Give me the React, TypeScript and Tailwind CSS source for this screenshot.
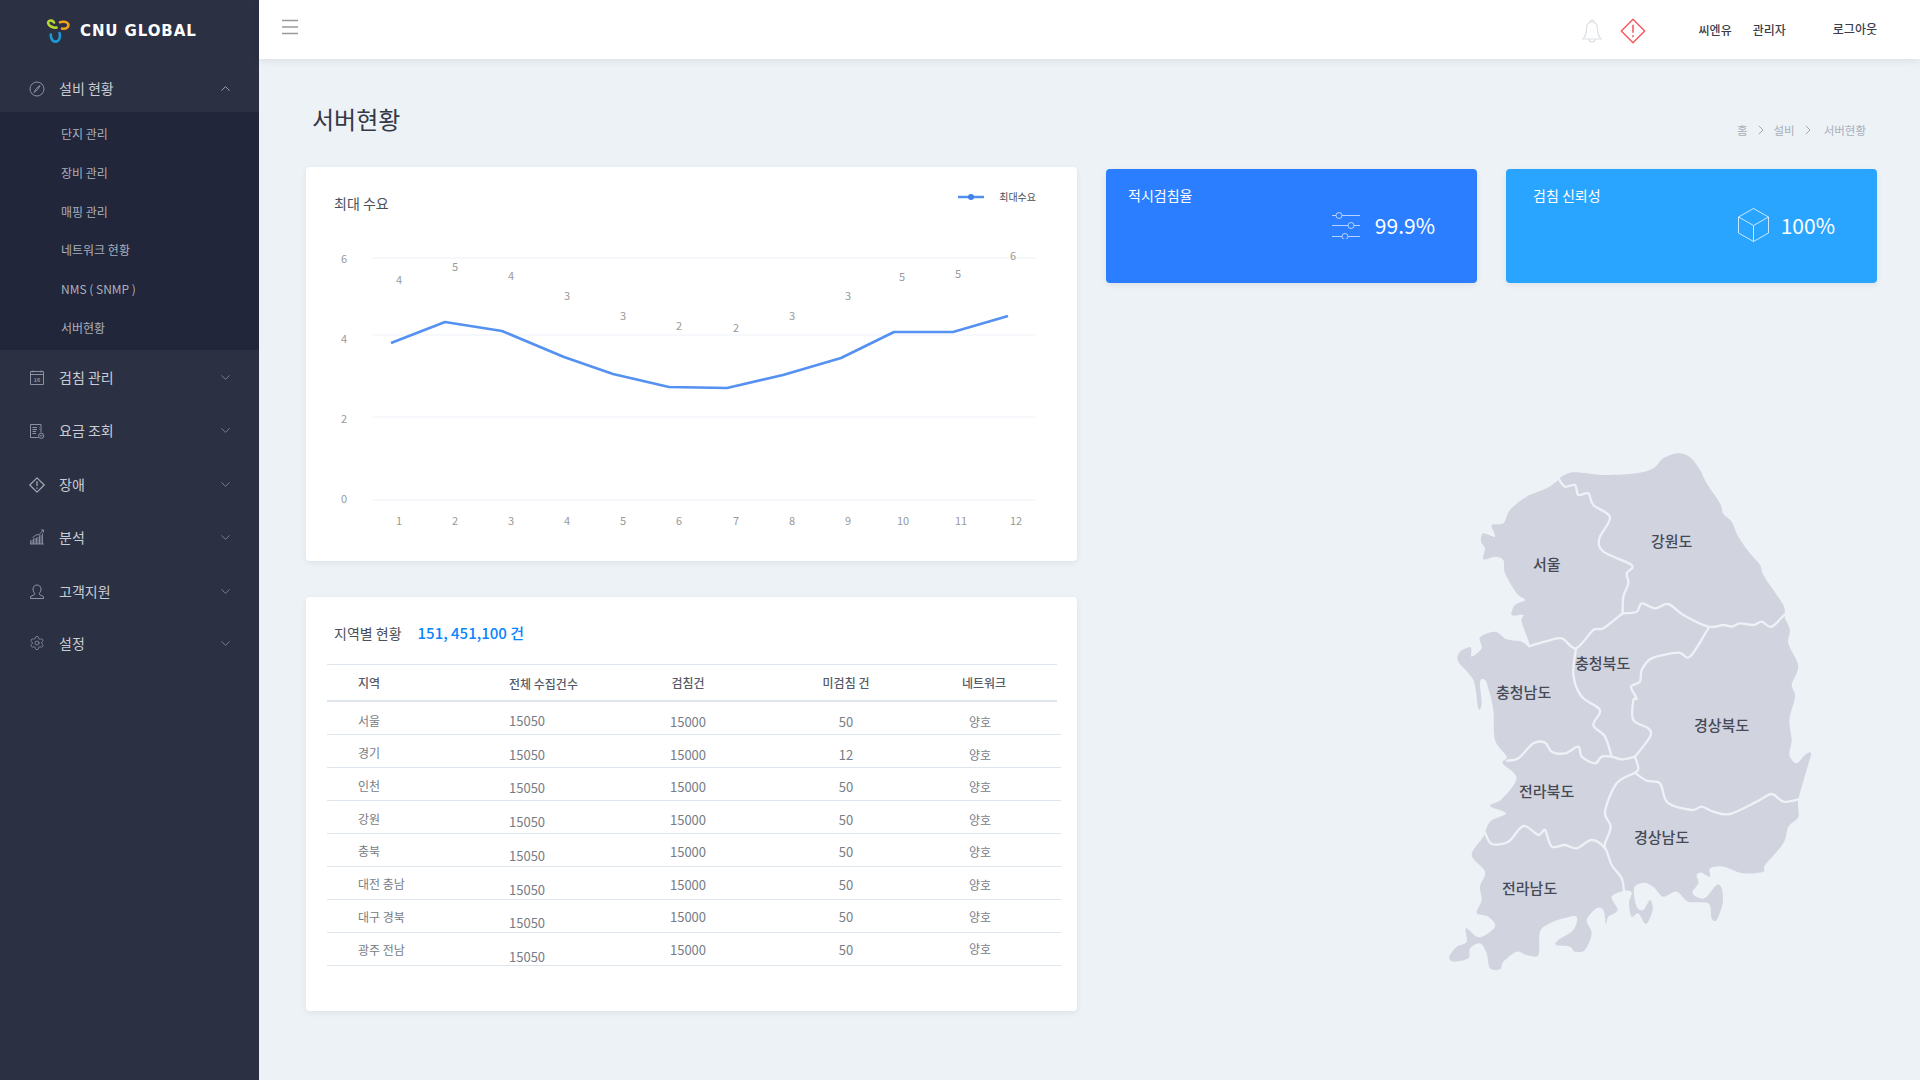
import React from "react";
import { ChevronDown, ChevronRight, ChevronUp, Settings } from "lucide-react";

const FONT = "[font-family:'Noto_Sans_CJK_KR','Noto_Sans',sans-serif]";

// smooth curve through a list of points (catmull-rom to bezier)
const smooth = (pts: number[][], close = false) => {
  const n = pts.length;
  const at = (i: number) => (close ? pts[(i + n) % n] : pts[Math.max(0, Math.min(n - 1, i))]);
  let d = `M${pts[0][0]} ${pts[0][1]}`;
  const end = close ? n : n - 1;
  for (let i = 0; i < end; i++) {
    const [p0, p1, p2, p3] = [at(i - 1), at(i), at(i + 1), at(i + 2)];
    const k = 0.16;
    d += `C${p1[0] + (p2[0] - p0[0]) * k} ${p1[1] + (p2[1] - p0[1]) * k} ${p2[0] - (p3[0] - p1[0]) * k} ${p2[1] - (p3[1] - p1[1]) * k} ${p2[0]} ${p2[1]}`;
  }
  return d + (close ? "Z" : "");
};

const Y = 780; // second half of the map was traced with this y offset
const low = (pts: number[][]) => pts.map(([x, y]) => [x, y + Y]);

const outline = [
  [392, 112], [430, 97], [520, 105], [620, 100], [670, 85], [700, 55], [745, 40], [780, 52], [810, 90], [830, 130], [870, 190], [880, 222], [905, 245], [925, 290], [960, 340], [990, 375], [1000, 405], [1030, 450], [1060, 495], [1065, 520], [1065, 535], [1080, 570], [1075, 610], [1103, 670], [1100, 700], [1085, 735], [1095, 770],
  ...low([[1078, 60], [1085, 120], [1078, 165], [1100, 190], [1125, 165], [1143, 160], [1130, 210], [1105, 300], [1105, 350], [1075, 380], [1060, 430], [1005, 495], [1000, 515], [940, 520], [880, 500], [840, 505], [840, 530], [815, 518], [800, 525], [805, 550], [787, 578], [810, 595], [830, 590], [860, 555], [875, 565], [878, 610], [860, 660], [845, 655], [835, 610], [775, 605], [740, 575], [700, 590], [670, 560], [640, 548], [612, 565], [620, 620], [640, 630], [660, 600], [668, 630], [648, 672], [625, 640], [605, 650], [597, 610], [605, 578], [585, 572], [545, 590], [563, 630], [535, 650], [528, 672], [520, 630], [500, 625], [470, 660], [485, 700], [465, 750], [435, 755], [420, 740], [378, 735], [385, 720], [430, 690], [440, 650], [400, 655], [360, 670], [330, 695], [325, 765], [290, 765], [260, 755], [220, 785], [210, 808], [180, 805], [170, 760], [150, 730], [120, 745], [115, 775], [70, 785], [58, 770], [80, 740], [110, 725], [108, 685], [148, 712], [195, 680], [175, 650], [140, 640], [155, 600], [150, 560], [165, 515], [125, 465], [160, 410], [180, 365], [228, 340], [180, 318], [215, 298], [260, 235], [218, 190], [230, 170], [195, 120], [190, 30]]),
  [175, 745], [165, 720], [150, 725], [155, 790], [145, 805], [130, 720], [85, 665], [90, 635], [122, 622], [125, 650], [155, 625], [150, 592], [195, 575], [230, 598], [275, 605], [300, 620], [275, 545], [280, 525], [245, 525], [255, 495], [285, 480], [260, 460], [225, 400], [220, 360], [195, 350], [160, 358], [165, 325], [153, 305], [160, 280], [195, 290], [185, 255], [220, 250], [240, 210], [290, 170], [350, 145], [385, 120],
];

const borders = [
  [[385, 115], [405, 140], [435, 135], [445, 165], [475, 160], [490, 195], [540, 232], [508, 295], [520, 335], [605, 375], [590, 400], [595, 430], [580, 470], [578, 520]],
  [[300, 618], [345, 605], [395, 595], [438, 625], [490, 570], [520, 565], [578, 520]],
  [[578, 520], [620, 515], [635, 490], [675, 505], [715, 492], [760, 525], [835, 560], [880, 555], [905, 560], [930, 550], [970, 555], [995, 545], [1025, 560], [1065, 522]],
  [[835, 565], [780, 650], [745, 638], [665, 655], [635, 690], [630, 725], [603, 740], [620, 775], ...low([[610, 0], [610, 60], [655, 85], [660, 110], [615, 170]])],
  [[438, 625], [430, 705], [455, 770], ...low([[510, 30], [490, 75], [525, 110], [545, 170]])],
  low([[232, 182], [265, 175], [310, 130], [345, 128], [365, 155], [405, 160], [445, 140], [455, 170], [495, 190], [515, 170], [545, 170], [575, 178], [615, 170]]),
  low([[615, 170], [625, 205], [615, 218], [560, 250], [525, 335], [542, 380], [525, 430], [525, 445]]),
  low([[615, 218], [650, 242], [690, 250], [713, 308], [785, 330], [815, 320], [850, 335], [900, 342], [980, 305], [1025, 282], [1060, 305], [1105, 298]]),
  low([[165, 398], [185, 432], [235, 425], [280, 378], [325, 405], [345, 390], [365, 440], [405, 435], [440, 445], [485, 420], [525, 445], [545, 495], [575, 535], [582, 575]]),
];

const mapLabels = [
  { name: "강원도", pos: "left-[221px] top-[91px]" },
  { name: "서울", pos: "left-[103px] top-[114px]" },
  { name: "충청북도", pos: "left-[145px] top-[213px]" },
  { name: "충청남도", pos: "left-[66px] top-[242px]" },
  { name: "경상북도", pos: "left-[264px] top-[275px]" },
  { name: "전라북도", pos: "left-[89px] top-[341px]" },
  { name: "경상남도", pos: "left-[204px] top-[387px]" },
  { name: "전라남도", pos: "left-[72px] top-[438px]" },
];

const KoreaMap = () => (
  <div className="relative ml-[324px] mt-[157px] h-[540px] w-[400px]">
    <svg viewBox="0 0 1200 1620" className="h-full w-full">
      <path d={smooth(outline, true)} fill="#d1d3df" />
      {borders.map((b, i) => (
        <path key={i} d={smooth(b)} fill="none" stroke="#edf2f7" strokeWidth="7" strokeLinecap="round" strokeLinejoin="round" />
      ))}
    </svg>
    {mapLabels.map((l) => (
      <span key={l.name} className={`absolute ${l.pos} text-[15px] font-medium leading-[20px] text-[#454a56]`}>
        {l.name}
      </span>
    ))}
  </div>
);

const xs = [399, 455, 511, 567, 623, 679, 736, 792, 848, 903, 961, 1016];
const valueLabels = [
  [399, 280, "4"], [455, 267, "5"], [511, 276, "4"], [567, 296, "3"], [623, 316, "3"], [679, 326, "2"],
  [736, 328, "2"], [792, 316, "3"], [848, 296, "3"], [902, 277, "5"], [958, 274, "5"], [1013, 256, "6"],
] as const;
const linePts = [
  [391, 343], [445, 322], [502, 331], [564, 357], [613, 374], [669, 387], [727, 388], [783, 375], [841, 358], [894, 332], [953, 332], [1008, 316],
];

const DemandChart = () => (
  <div className="h-[394px] w-[771px] rounded-[4px] bg-white shadow-[0_2px_6px_rgba(0,0,0,0.07)]">
    <div className="flex h-[63px] justify-between pl-[28px] pr-[41px]">
      <span className="pt-[26px] text-[14px] leading-[20px] text-[#4a4f59]">최대 수요</span>
      <div className="flex items-center gap-[15px] self-start pt-[23px]">
        <svg width="26" height="8" viewBox="0 0 26 8">
          <path d="M0 4H26" stroke="#4f8ff0" strokeWidth="2.5" />
          <circle cx="13" cy="4" r="3" fill="#3f82ea" />
        </svg>
        <span className="text-[10px] leading-[14px] text-[#4a4f59]">최대수요</span>
      </div>
    </div>
    <svg viewBox="306 230 771 331" className="block h-[331px] w-[771px]">
      {[258, 335, 417, 500].map((y) => (
        <path key={y} d={`M373 ${y}H1035`} stroke="#edf2f7" strokeWidth="1" />
      ))}
      {[[259, "6"], [339, "4"], [419, "2"], [499, "0"]].map(([y, t]) => (
        <text key={t} x="344" y={Number(y) + 4} fontSize="11" fill="#999" textAnchor="middle">{t}</text>
      ))}
      {xs.map((x, i) => (
        <text key={x} x={x} y="525" fontSize="11" fill="#999" textAnchor="middle">{i + 1}</text>
      ))}
      {valueLabels.map(([x, y, t], i) => (
        <text key={i} x={x} y={y + 4} fontSize="11" fill="#999" textAnchor="middle">{t}</text>
      ))}
      <polyline points={linePts.map((p) => p.join(",")).join(" ")} fill="none" stroke="#5591f0" strokeWidth="2.6" strokeLinejoin="round" />
    </svg>
  </div>
);

const rows = [
  { area: "서울", miss: "50", a: "pt-[6px]", b: "pt-[6px]", c: "pt-[8px]" },
  { area: "경기", miss: "12", a: "pt-[3px]", b: "pt-[7px]", c: "pt-[7px]" },
  { area: "인천", miss: "50", a: "pt-[3px]", b: "pt-[7px]", c: "pt-[5px]" },
  { area: "강원", miss: "50", a: "pt-[3px]", b: "pt-[9px]", c: "pt-[5px]" },
  { area: "충북", miss: "50", a: "pt-[1px]", b: "pt-[11px]", c: "pt-[3px]" },
  { area: "대전 충남", miss: "50", a: "pt-[1px]", b: "pt-[13px]", c: "pt-[3px]" },
  { area: "대구 경북", miss: "50", a: "pt-[1px]", b: "pt-[13px]", c: "pt-[1px]" },
  { area: "광주 전남", miss: "50", a: "pt-[1px]", b: "pt-[14px]", c: "pb-[1px]" },
];

const cols = "grid grid-cols-[182px_119px_120px_196px_72px_45px]";

const RegionTable = () => (
  <div className="mt-[36px] h-[414px] w-[771px] rounded-[4px] bg-white pl-[21px] pr-[16px] shadow-[0_2px_6px_rgba(0,0,0,0.07)]">
    <div className="flex h-[67px] items-center gap-[16px] pl-[7px] pt-[6px]">
      <span className="text-[14px] text-[#4a4f59]">지역별 현황</span>
      <span className="text-[15px] font-medium text-[#0a84ff]">151, 451,100 건</span>
    </div>
    <div className={`${cols} mr-[4px] h-[38px] items-center border-y border-t-[#dfe5ec] border-b-2 border-b-[#dfe5ec] pt-[1px] text-[12px] font-medium text-[#555a66]`}>
      <span className="pl-[31px]">지역</span>
      <span className="pt-[2px]">전체 수집건수</span>
      <span className="text-center">검침건</span>
      <span className="text-center">미검침 건</span>
      <span className="pl-[8px] text-center">네트워크</span>
    </div>
    {rows.map((r) => (
      <div key={r.area} className={`${cols} h-[33px] items-center border-b border-[#dfe5ec] text-[#777c86]`}>
        <span className={`pl-[31px] text-[12px] ${r.a}`}>{r.area}</span>
        <span className={`text-[13px] ${r.b}`}>15050</span>
        <span className={`text-center text-[13px] ${r.c}`}>15000</span>
        <span className={`text-center text-[13px] ${r.c}`}>{r.miss}</span>
        <span className={`text-center text-[12px] ${r.c}`}>양호</span>
      </div>
    ))}
  </div>
);

const SlidersIcon = () => (
  <svg width="28" height="27" viewBox="0 0 28 27" fill="none" stroke="#fff" strokeOpacity="0.65" strokeWidth="1">
    <path d="M0 3.5H4M10 3.5H28M0 13.5H16M22 13.5H28M0 24.5H10M16 24.5H28" />
    <circle cx="7" cy="3.5" r="3" />
    <circle cx="19" cy="13.5" r="3" />
    <circle cx="13" cy="24.5" r="3" />
  </svg>
);

const CubeIcon = () => (
  <svg width="31" height="34" viewBox="0 0 31 34" fill="none" stroke="#fff" strokeOpacity="0.75" strokeWidth="1">
    <path d="M15.5 .5L30.5 9V25L15.5 33.5L.5 25V9Z" />
    <path d="M.5 9L15.5 17.5L30.5 9M15.5 17.5V33.5" />
  </svg>
);

const StatCard = ({ title, value, color, gap, pl, icon }: { title: string; value: string; color: string; gap: string; pl: string; icon: React.ReactNode }) => (
  <div className={`h-[114px] w-[371px] rounded-[4px] ${color} shadow-[0_2px_6px_rgba(0,0,0,0.07)] ${pl} pr-[42px] pt-[16px] text-white`}>
    <div className="text-[14px] leading-[20px]">{title}</div>
    <div className={`flex h-[40px] items-center justify-end ${gap}`}>
      {icon}
      <span className="text-[21px] leading-[28px]">{value}</span>
    </div>
  </div>
);

const iconProps = { width: 16, height: 16, viewBox: "0 0 16 16", fill: "none", stroke: "#8d92a3", strokeWidth: 1 };

const CompassIcon = () => (
  <svg {...iconProps} className="mt-[1px]">
    <circle cx="8" cy="8" r="7" />
    <path d="M11 4.6L7.4 7.4L5 11.4L8.6 8.6Z" />
  </svg>
);
const CalendarIcon = () => (
  <svg {...iconProps}>
    <path d="M1.5 1.5H14.5V14.5H1.5ZM1.5 4.5H14.5M4 .5V2.5M12 .5V2.5" />
    <text x="8" y="11.8" fontSize="5.5" fontWeight="700" textAnchor="middle" fill="#8d92a3" stroke="none">16</text>
  </svg>
);
const BillIcon = () => (
  <svg {...iconProps}>
    <path d="M9.5 14.5H1.5V1.5H12V9.5M3.5 4.5H8M3.5 6.5H8M3.5 8.5H7M3.5 10.5H7M10 4.5H10.5M10 6.5H10.5" />
    <circle cx="12.2" cy="12.8" r="2.6" />
    <path d="M10.8 12.8H13.6" />
  </svg>
);
const AlertIcon = ({ color = "#a5a9b6", size = 16, sw = 1.2 }: { color?: string; size?: number; sw?: number }) => (
  <svg width={size} height={size} viewBox="0 0 16 16" fill="none" stroke={color} strokeWidth={sw} strokeLinejoin="round">
    <path d="M8 .8L15.2 8L8 15.2L.8 8Z" />
    <path d="M8 4.2V9M8 10.6V11.8" strokeWidth={sw * 1.1} />
  </svg>
);
const GrowthIcon = () => (
  <svg {...iconProps}>
    <path d="M1 15H15M1.5 15V11.5M4.5 15V9.5M7.5 15V8.5M10.5 15V6.5M13.5 15V4.5M3.5 8.5L8 5.5L10 6L14.5 .8M12 1H14.5V3.5M3 15V10.5M6 15V9M9 15V8M12 15V6" strokeWidth="0.9" />
  </svg>
);
const UserIcon = () => (
  <svg {...iconProps}>
    <path d="M5.6 9.2C4.4 7.8 4 6.4 4 5C4 2.6 5.8 1 8 1C10.2 1 12 2.6 12 5C12 6.4 11.6 7.8 10.4 9.2V10.6L14.5 12.6V14.5H1.5V12.6L5.6 10.6Z" />
  </svg>
);

const menuBelow = [
  { label: "검침 관리", icon: <CalendarIcon />, nudge: "" },
  { label: "요금 조회", icon: <BillIcon />, nudge: "" },
  { label: "장애", icon: <AlertIcon />, nudge: "pt-[2px]" },
  { label: "분석", icon: <GrowthIcon />, nudge: "pt-[1px]" },
  { label: "고객지원", icon: <UserIcon />, nudge: "pt-[4px]" },
  { label: "설정", icon: <Settings size={16} strokeWidth={1} color="#a0a4b2" />, nudge: "pt-[1px]" },
];

const subMenu = ["단지 관리", "장비 관리", "매핑 관리", "네트워크 현황", "NMS ( SNMP )", "서버현황"];

const Logo = () => (
  <div className="flex h-[59px] items-center gap-[10px] pl-[46px] pt-[3px]">
    <svg width="24" height="24" viewBox="0 0 24 24" fill="none" strokeWidth="2.6" strokeLinecap="round">
      <path d="M10.5 8.5C9.5 9 7 8.5 5 7.5C2 6 1.5 3 3 2C4.5 1 7 1.5 8 3.5" stroke="#b9d532" />
      <path d="M14 3.2C16 2.5 21 2.2 22.2 5C23.2 8 20 10.5 16 9.5" stroke="#f2a11d" />
      <path d="M13.5 14C14.5 18 13.5 22 10 22.6C7 23 4.5 20 4.8 15.5" stroke="#1d9ad6" />
    </svg>
    <span className="text-[15px] font-bold leading-none tracking-[0.9px] text-white [font-family:'DejaVu_Sans',sans-serif]">CNU GLOBAL</span>
  </div>
);

const Sidebar = () => (
  <aside className="w-[259px] shrink-0 bg-[#2b3143]">
    <Logo />
    <div className="flex h-[53px] items-center pl-[29px] pr-[26px] pt-[5px] text-[14px] text-[#c9ccd4]">
      <CompassIcon />
      <span className="ml-[14px] flex-1">설비 현황</span>
      <ChevronUp size={15} strokeWidth={1.2} color="#c4c7cf" />
    </div>
    <div className="h-[238px] bg-[#21263a] pt-[3px]">
      {subMenu.map((s) => (
        <div key={s} className="flex h-[38.7px] items-center pl-[61px] text-[12px] text-[#acafba]">{s}</div>
      ))}
    </div>
    <div className="pt-[1px]">
      {menuBelow.map((m) => (
        <div key={m.label} className={`flex h-[53px] items-center pl-[29px] pr-[26px] text-[14px] text-[#c9ccd4] ${m.nudge}`}>
          {m.icon}
          <span className="ml-[14px] flex-1">{m.label}</span>
          <ChevronDown size={15} strokeWidth={1} color="#a8acb8" />
        </div>
      ))}
    </div>
  </aside>
);

const Topbar = () => (
  <header className="flex h-[59px] items-center bg-white pl-[23px] pr-[43px] shadow-[0_2px_8px_rgba(0,0,0,0.08)]">
    <svg width="16" height="16" viewBox="0 0 16 16" stroke="#999" strokeWidth="1.3" className="mb-[6px]">
      <path d="M0 1.5H16M0 8H16M0 14.5H16" />
    </svg>
    <div className="ml-auto flex items-center pt-[3px]">
      <svg width="20" height="25" viewBox="0 0 20 25" fill="none" stroke="#dcdfe4" strokeWidth="1.2">
        <path d="M10 3C6 3 4.5 6 4.5 10C4.5 14 3.5 17 1 20H19C16.5 17 15.5 14 15.5 10C15.5 6 14 3 10 3ZM8 3C8 .5 12 .5 12 3M7 20C7 24 13 24 13 20" />
      </svg>
      <div className="ml-[18px]"><AlertIcon color="#f5565b" size={26} sw={0.85} /></div>
    </div>
    <div className="ml-[53px] flex items-center text-[12px] font-medium text-[#3a3f4b]">
      <span className="pt-[1px]">씨엔유</span>
      <span className="ml-[21px] pt-[1px]">관리자</span>
      <span className="mb-[2px] ml-[47px]">로그아웃</span>
    </div>
  </header>
);

export default function App() {
  return (
    <div className={`flex h-[1080px] w-[1920px] overflow-hidden bg-[#edf2f7] ${FONT}`}>
      <Sidebar />
      <div className="min-w-0 flex-1">
        <Topbar />
        <div className="flex h-[108px] items-start justify-between pl-[53px] pr-[54px]">
          <h1 className="pt-[42px] text-[24px] leading-[36px] text-[#343946]">서버현황</h1>
          <div className="flex items-center pt-[62px] text-[11.5px] leading-[18px] text-[#a9afb8]">
            <span>홈</span>
            <ChevronRight size={16} strokeWidth={1.2} color="#8f96a0" className="mx-[5px]" />
            <span>설비</span>
            <ChevronRight size={16} strokeWidth={1.2} color="#8f96a0" className="mx-[5px]" />
            <span className="ml-[3px]">서버현황</span>
          </div>
        </div>
        <div className="flex gap-[29px] pl-[47px]">
          <div className="w-[771px]">
            <DemandChart />
            <RegionTable />
          </div>
          <div className="w-[771px] pt-[2px]">
            <div className="flex gap-[29px]">
              <StatCard title="적시검침율" value="99.9%" color="bg-[#2a7eff]" gap="gap-[15px]" pl="pl-[22px]" icon={<SlidersIcon />} />
              <StatCard title="검침 신뢰성" value="100%" color="bg-[#2aa5ff]" gap="gap-[12px]" pl="pl-[27px]" icon={<CubeIcon />} />
            </div>
            <KoreaMap />
          </div>
        </div>
      </div>
    </div>
  );
}
